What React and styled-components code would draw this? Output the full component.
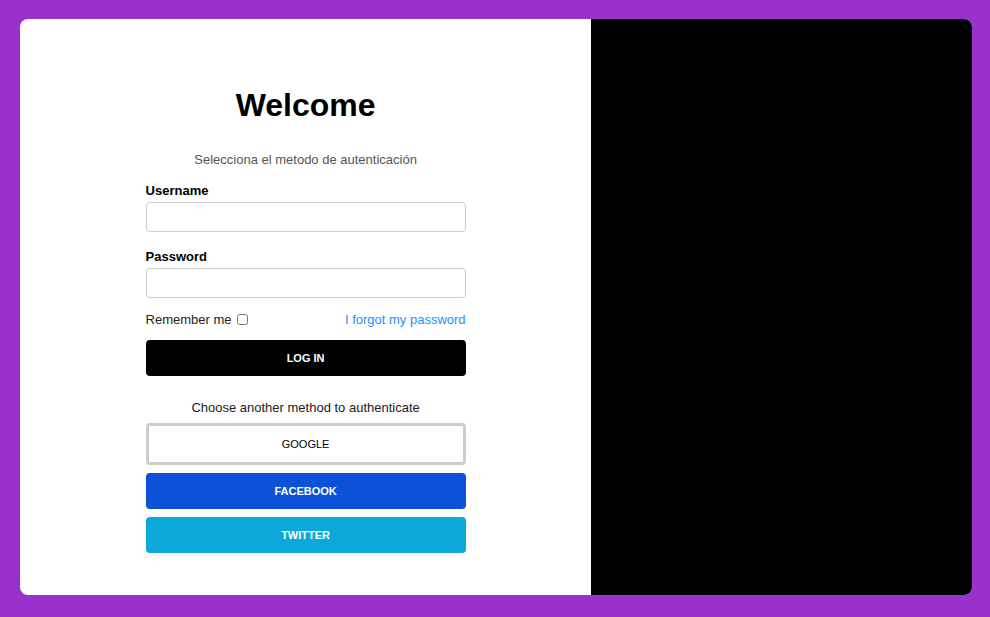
import React from "react";
import styled, { createGlobalStyle } from "styled-components";

const GlobalStyle = createGlobalStyle`
    html, body {
        margin: 0;
        padding: 0;
        background: #9932cc;
        font-family: "Liberation Sans", Arial, sans-serif;
    }
`;

const App = () => {
    return (
        <>
            <GlobalStyle />
            <Page>
                <Card>
                    <LeftPanel>
                        <Form onSubmit={(e) => e.preventDefault()}>
                            <Title>Welcome</Title>
                            <Subtitle>Selecciona el metodo de autenticación</Subtitle>

                            <Label htmlFor="username">Username</Label>
                            <Input id="username" type="text" />

                            <Label htmlFor="password" $top={17}>Password</Label>
                            <Input id="password" type="password" />

                            <OptionsRow>
                                <Remember>
                                    Remember me
                                    <Checkbox type="checkbox" />
                                </Remember>
                                <ForgotLink href="#">I forgot my password</ForgotLink>
                            </OptionsRow>

                            <Button $bg="#000000" $color="#ffffff">LOG IN</Button>

                            <Divider>Choose another method to authenticate</Divider>

                            <SocialList>
                                <Button type="button" $bg="#ffffff" $color="#000000" $outlined>GOOGLE</Button>
                                <Button type="button" $bg="#0b52d9" $color="#ffffff">FACEBOOK</Button>
                                <Button type="button" $bg="#0ba8d9" $color="#ffffff">TWITTER</Button>
                            </SocialList>
                        </Form>
                    </LeftPanel>
                    <RightPanel />
                </Card>
            </Page>
        </>
    );
};

const Page = styled.div`
    box-sizing: border-box;
    height: 617px;
    padding: 19px 18px 22px 20px;
    display: flex;
`;

const Card = styled.div`
    flex: 1;
    display: flex;
    border-radius: 8px;
    overflow: hidden;
    background: #ffffff;
`;

const LeftPanel = styled.div`
    flex: 0 0 60%;
    display: flex;
    justify-content: center;
    padding-top: 68px;
    box-sizing: border-box;
`;

const RightPanel = styled.div`
    flex: 1;
    background: #000000;
`;

const Form = styled.form`
    width: 320px;
    display: flex;
    flex-direction: column;
`;

const Title = styled.h1`
    margin: 0;
    font-size: 32px;
    line-height: 37px;
    font-weight: 700;
    text-align: center;
    color: #000000;
`;

const Subtitle = styled.p`
    margin: 28px 0 0;
    font-size: 13px;
    line-height: 15px;
    text-align: center;
    color: #555555;
`;

const Label = styled.label`
    display: block;
    margin: ${props => props.$top || 16}px 0 4px;
    font-size: 13px;
    line-height: 15px;
    font-weight: 700;
    color: #000000;
`;

const Input = styled.input`
    box-sizing: border-box;
    width: 100%;
    height: 30px;
    margin: 0;
    padding: 0 8px;
    border: 1px solid #cccccc;
    border-radius: 4px;
    font-family: inherit;
    font-size: 13px;
    outline: none;
`;

const OptionsRow = styled.div`
    display: flex;
    justify-content: space-between;
    align-items: center;
    margin: 13.5px 0 13.5px;
    height: 15px;
`;

const Remember = styled.label`
    display: flex;
    align-items: center;
    font-size: 13px;
    line-height: 15px;
    color: #222222;
`;

const Checkbox = styled.input`
    width: 11px;
    height: 11px;
    margin: 0 0 0 5px;
`;

const ForgotLink = styled.a`
    font-size: 13px;
    line-height: 15px;
    color: #1e90ff;
    text-decoration: none;
`;

const Button = styled.button`
    box-sizing: border-box;
    width: 100%;
    height: ${props => props.$outlined ? 42 : 36}px;
    margin: 0;
    padding: 0;
    border: ${props => props.$outlined ? "3px solid #cccccc" : "none"};
    border-radius: 4px;
    background: ${props => props.$bg};
    color: ${props => props.$color};
    font-family: inherit;
    font-size: 11px;
    font-weight: ${props => props.$outlined ? 400 : 700};
    cursor: pointer;
`;

const Divider = styled.p`
    margin: 23.5px 0 8.5px;
    font-size: 13px;
    line-height: 15px;
    text-align: center;
    color: #222222;
`;

const SocialList = styled.div`
    display: flex;
    flex-direction: column;
    gap: 8px;
`;

export default App;
